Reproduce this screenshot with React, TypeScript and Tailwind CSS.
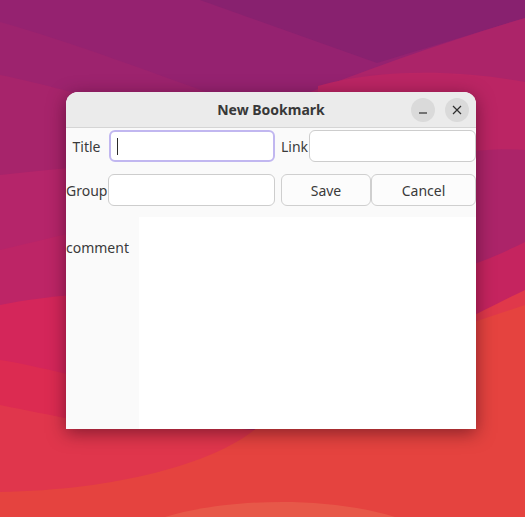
import React from "react";

function Wallpaper() {
  return (
    <svg
      className="absolute inset-0 w-full h-full"
      viewBox="0 0 525 517"
      preserveAspectRatio="none"
    >
      <rect width="525" height="517" fill="#952270" />
      <path d="M200,0 L525,0 L525,18 L377,63 Z" fill="#88216f" />
      <path d="M0,22 C80,45 150,72 240,104 L240,517 L0,517 Z" fill="#9d236e" />
      <path d="M525,18 C450,40 370,68 290,100 L290,517 L525,517 Z" fill="#ac2469" />
      <path d="M0,75 C35,82 70,92 120,104 L120,517 L0,517 Z" fill="#a7246b" />
      <path d="M318,86 C380,68 460,70 525,82 L525,150 C505,148 485,150 460,152 L318,160 Z" fill="#bb2564" />
      <path d="M0,175 C25,172 50,170 80,167 L80,517 L0,517 Z" fill="#b5256a" />
      <path d="M0,250 C25,244 50,238 80,231 L80,517 L0,517 Z" fill="#bd2566" />
      <path d="M460,268 C485,262 508,250 525,242 L525,517 L460,517 Z" fill="#c5245f" />
      <path d="M0,305 C25,300 50,297 80,294 L80,517 L0,517 Z" fill="#d4265a" />
      <path d="M0,360 C25,364 50,370 80,377 L80,517 L0,517 Z" fill="#dc2b51" />
      <path d="M460,322 C485,310 508,298 525,290 L525,517 L460,517 Z" fill="#e0384a" />
      <path d="M0,405 C25,410 50,415 80,421 L260,430 L260,517 L0,517 Z" fill="#e0364c" />
      <path d="M0,492 C120,490 220,462 260,425 L300,400 L420,340 L525,305 L525,517 L0,517 Z" fill="#e5433f" />
      <path d="M165,517 C220,500 320,494 395,517 Z" fill="#e75849" />
    </svg>
  );
}

function Field({ focused, className }: { focused?: boolean; className: string }) {
  return (
    <div
      className={
        focused
          ? `h-[32px] bg-white rounded-[6px] border-2 border-[#c1b7f0] flex items-center pl-[6px] ${className}`
          : `h-[32px] bg-white rounded-[6px] border border-[#cdcdcd] ${className}`
      }
    >
      {focused && <div className="w-px h-[17px] bg-[#2b2b2b]" />}
    </div>
  );
}

function Button({ label, className }: { label: string; className: string }) {
  return (
    <button className={`h-[32px] bg-[#fcfcfc] rounded-[6px] border border-[#cfcfcf] text-[14px] text-[#3a3a3a] ${className}`}>
      {label}
    </button>
  );
}

export default function App() {
  return (
    <div
      className="relative w-[525px] h-[517px] overflow-hidden"
      style={{ fontFamily: '"Noto Sans", "Open Sans", sans-serif' }}
    >
      <Wallpaper />

      <div className="relative pt-[92px] pl-[66px]">
        {/* Window */}
        <div className="w-[410px] h-[337px] flex flex-col bg-[#fafafa] rounded-t-[12px] shadow-[0_4px_18px_rgba(40,0,20,0.5)]">
          {/* Title bar */}
          <div className="relative h-[36px] shrink-0 flex items-center justify-center bg-[#ebebeb] rounded-t-[12px] border-b border-[#d5d5d5]">
            <span className="text-[14px] font-bold text-[#383838]">New Bookmark</span>
            <div className="absolute right-[7px] top-[6px] flex gap-[10px]">
              <div className="w-[24px] h-[24px] rounded-full bg-[#dadada] flex items-center justify-center">
                <svg width="10" height="10" viewBox="0 0 10 10">
                  <line x1="1" y1="8" x2="9" y2="8" stroke="#2e2e2e" strokeWidth="1.2" />
                </svg>
              </div>
              <div className="w-[24px] h-[24px] rounded-full bg-[#dadada] flex items-center justify-center">
                <svg width="10" height="10" viewBox="0 0 10 10">
                  <path d="M1 1 L9 9 M9 1 L1 9" stroke="#2e2e2e" strokeWidth="1.2" />
                </svg>
              </div>
            </div>
          </div>

          {/* Row 1 */}
          <div className="flex items-center mt-[2px] text-[14px] text-[#3a3a3a]">
            <span className="w-[41px] text-center">Title</span>
            <Field focused className="ml-[2px] w-[166px]" />
            <span className="ml-[6px] w-[28px]">Link</span>
            <Field className="flex-1" />
          </div>

          {/* Row 2 */}
          <div className="flex items-center mt-[12px] text-[14px] text-[#3a3a3a]">
            <span className="w-[42px]">Group</span>
            <Field className="w-[167px]" />
            <Button label="Save" className="ml-[6px] w-[90px]" />
            <Button label="Cancel" className="flex-1" />
          </div>

          {/* Row 3 */}
          <div className="flex flex-1 mt-[11px]">
            <span className="w-[73px] pt-[20px] text-[14px] text-[#3a3a3a]">comment</span>
            <div className="flex-1 bg-white" />
          </div>
        </div>
      </div>
    </div>
  );
}
